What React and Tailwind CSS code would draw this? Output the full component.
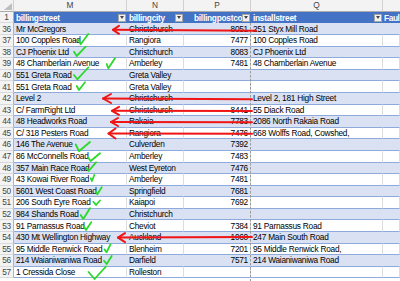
import React from 'react';

const COLS = 'grid grid-cols-[14px_113px_57px_67px_132px_17px]';

const rows = [
  { n: 36, m: 'Mr McGregors', c: 'Christchurch', p: '8051', q: '251 Styx Mill Road' },
  { n: 37, m: '100 Copples Road', c: 'Rangiora', p: '7477', q: '100 Copples Road' },
  { n: 38, m: 'CJ Phoenix Ltd', c: 'Christchurch', p: '8083', q: 'CJ Phoenix Ltd' },
  { n: 39, m: '48 Chamberlain Avenue', c: 'Amberley', p: '7481', q: '48 Chamberlain Avenue' },
  { n: 40, m: '551 Greta Road', c: 'Greta Valley', p: '', q: '' },
  { n: 41, m: '551 Greta Road', c: 'Greta Valley', p: '', q: '' },
  { n: 42, m: 'Level 2', c: 'Christchurch', p: '', q: 'Level 2, 181 High Street' },
  { n: 43, m: 'C/ FarmRight Ltd', c: 'Christchurch', p: '8441', q: '55 Diack Road' },
  { n: 44, m: '48 Headworks Road', c: 'Rakaia', p: '7783', q: '2086 North Rakaia Road' },
  { n: 45, m: 'C/ 318 Pesters Road', c: 'Rangiora', p: '7476', q: '668 Wolffs Road, Cowshed,' },
  { n: 46, m: '146 The Avenue', c: 'Culverden', p: '7392', q: '' },
  { n: 47, m: '86 McConnells Road', c: 'Amberley', p: '7483', q: '' },
  { n: 48, m: '357 Main Race Road', c: 'West Eyreton', p: '7476', q: '' },
  { n: 49, m: '43 Kowai River Road', c: 'Amberley', p: '7481', q: '' },
  { n: 50, m: '5601 West Coast Road', c: 'Springfield', p: '7681', q: '' },
  { n: 51, m: '206 South Eyre Road', c: 'Kaiapoi', p: '7692', q: '' },
  { n: 52, m: '984 Shands Road', c: 'Christchurch', p: '', q: '' },
  { n: 53, m: '91 Parnassus Road', c: 'Cheviot', p: '7384', q: '91 Parnassus Road' },
  { n: 54, m: '430 Mt Wellington Highway', c: 'Auckland', p: '1060', q: '247 Main South Road' },
  { n: 55, m: '95 Middle Renwick Road', c: 'Blenheim', p: '7201', q: '95 Middle Renwick Road,' },
  { n: 56, m: '214 Waianiwaniwa Road', c: 'Darfield', p: '7571', q: '214 Waianiwaniwa Road' },
  { n: 57, m: '1 Cressida Close', c: 'Rolleston', p: '', q: '' },
];

const checks = [
  '78.7,40 80.7,44.3 88.3,34',
  '74,51.7 76.7,56 85.7,46.7',
  '106.7,64 108.3,68.3 115,58.3',
  '74,75 77.3,79.3 88.3,67.5',
  '76.7,86 79,90 85,82.3',
  '75.7,144.5 79,151.2 90,142',
  '88.3,157.7 90.7,161 100,153.3',
  '86.7,168.3 88.7,171 96,162.3',
  '90.7,178.3 92,181 94.3,175',
  '95.7,191.7 97.3,194.3 101.7,187.3',
  '93.3,201.7 96,205 100,200.5',
  '80.7,215 83.3,219 90,208.3',
  '83.3,225.7 86,230 91.3,222.3',
  '104.5,249.5 106.5,252.3 110.5,244.3',
  '104,260.7 106.7,264 111.7,256',
  '88.5,272 94.5,279 106,266.5',
];

const arrows = [
  { tip: [113, 29.8], tail: [256, 30.8], bx: 6, by: 4 },
  { tip: [103, 98.5], tail: [252, 99.3], bx: 8, by: 4.5 },
  { tip: [112, 110.8], tail: [252, 111], bx: 7, by: 4 },
  { tip: [111, 122], tail: [252, 122.3], bx: 7, by: 4 },
  { tip: [108.5, 133.5], tail: [252, 133.8], bx: 7, by: 5 },
  { tip: [118, 237.6], tail: [252, 237], bx: 7, by: 4.5 },
];

function Dropdown() {
  return (
    <div className="shrink-0 w-[8px] h-[8px] mr-[1px] bg-[#F2F2F2] border border-[#A6A6A6] flex items-center justify-center">
      <svg width="4" height="3" viewBox="0 0 4 3">
        <polygon points="0,0 4,0 2,3" fill="#444" />
      </svg>
    </div>
  );
}

function HeaderCell({ label, pl = 'pl-[2px]' }) {
  return (
    <div className="bg-[#4472C4] flex items-center overflow-hidden">
      <div className={`flex-1 min-w-0 whitespace-nowrap text-white font-bold ${pl}`}>{label}</div>
      <Dropdown />
    </div>
  );
}

function DataRow({ r, band }) {
  const base = band
    ? 'bg-[#D9E1F2] border-b border-b-[#8EA9DB] border-r border-r-[#D9E1F2]'
    : 'bg-white border-b border-b-[#8EA9DB] border-r border-r-[#DCDCDC]';
  return (
    <div className={`${COLS} h-[11.6px]`}>
      <div className="bg-[#F3F3F3] border-r border-r-[#B3B3B3] border-b border-b-[#DADADA] text-[#444] flex items-center justify-center">
        {r.n}
      </div>
      <div className={`${base} flex items-center pl-[2px] whitespace-nowrap overflow-hidden`}>{r.m}</div>
      <div className={`${base} flex items-center pl-[2px] whitespace-nowrap overflow-hidden`}>{r.c}</div>
      <div className={`${base} flex items-center justify-end pr-[2px] whitespace-nowrap overflow-hidden`}>{r.p}</div>
      <div className={`${base} flex items-center pl-[2px] whitespace-nowrap overflow-hidden`}>{r.q}</div>
      <div className={`${base}`}></div>
    </div>
  );
}

export default function App() {
  return (
    <div className="relative w-[400px] h-[281px] overflow-hidden bg-white font-['Liberation_Sans',Arial,sans-serif] text-[8.3px] tracking-[-0.25px] text-black leading-none">
      {/* column letters */}
      <div className={`${COLS} h-[12px] text-[#444] tracking-normal`}>
        <div className="bg-[#F3F3F3] border-r border-r-[#D0D0D0] border-b border-b-[#ABABAB] flex items-end justify-end pr-[1px] pb-[1px]">
          <svg width="8" height="7" viewBox="0 0 8 7">
            <polygon points="8,0 8,7 0,7" fill="#BDBDBD" />
          </svg>
        </div>
        <div className="bg-[#F3F3F3] border-r border-r-[#D0D0D0] border-b border-b-[#ABABAB] flex items-center justify-center">M</div>
        <div className="bg-[#F3F3F3] border-r border-r-[#D0D0D0] border-b border-b-[#ABABAB] flex items-center justify-center">N</div>
        <div className="bg-[#F3F3F3] border-r border-r-[#D0D0D0] border-b border-b-[#ABABAB] flex items-center justify-center">P</div>
        <div className="bg-[#F3F3F3] border-r border-r-[#D0D0D0] border-b border-b-[#ABABAB] flex items-center justify-center">Q</div>
        <div className="bg-[#F3F3F3] border-b border-b-[#ABABAB]"></div>
      </div>
      {/* header row */}
      <div className={`${COLS} h-[11.4px]`}>
        <div className="bg-[#F3F3F3] border-r border-r-[#B3B3B3] border-b border-b-[#DADADA] text-[#444] flex items-center justify-center">1</div>
        <HeaderCell label="billingstreet" />
        <HeaderCell label="billingcity" />
        <HeaderCell label="billingpostco" pl="pl-[10px]" />
        <HeaderCell label="installstreet" />
        <div className="bg-[#4472C4] flex items-center pl-[1px] text-white font-bold whitespace-nowrap tracking-[-0.4px]">Faul</div>
      </div>
      {rows.map((r, i) => (
        <DataRow key={r.n} r={r} band={i % 2 === 0} />
      ))}

      {/* annotations */}
      <svg className="absolute left-0 top-0 pointer-events-none" width="400" height="281" viewBox="0 0 400 281">
        <line x1="250.5" y1="23" x2="250.5" y2="281" stroke="#9A9A9A" strokeWidth="1" strokeDasharray="2.5 1.5" />
        {arrows.map((a, i) => (
          <g key={i} stroke="#F01414" strokeWidth="2" fill="none" strokeLinecap="round" strokeLinejoin="round">
            <line x1={a.tail[0]} y1={a.tail[1]} x2={a.tip[0]} y2={a.tip[1]} />
            <polyline points={`${a.tip[0] + a.bx},${a.tip[1] - a.by} ${a.tip[0]},${a.tip[1]} ${a.tip[0] + a.bx},${a.tip[1] + a.by}`} />
          </g>
        ))}
        {checks.map((p, i) => (
          <polyline key={i} points={p} stroke="#2BD92B" strokeWidth="1.8" fill="none" strokeLinecap="round" strokeLinejoin="round" />
        ))}
      </svg>
    </div>
  );
}
